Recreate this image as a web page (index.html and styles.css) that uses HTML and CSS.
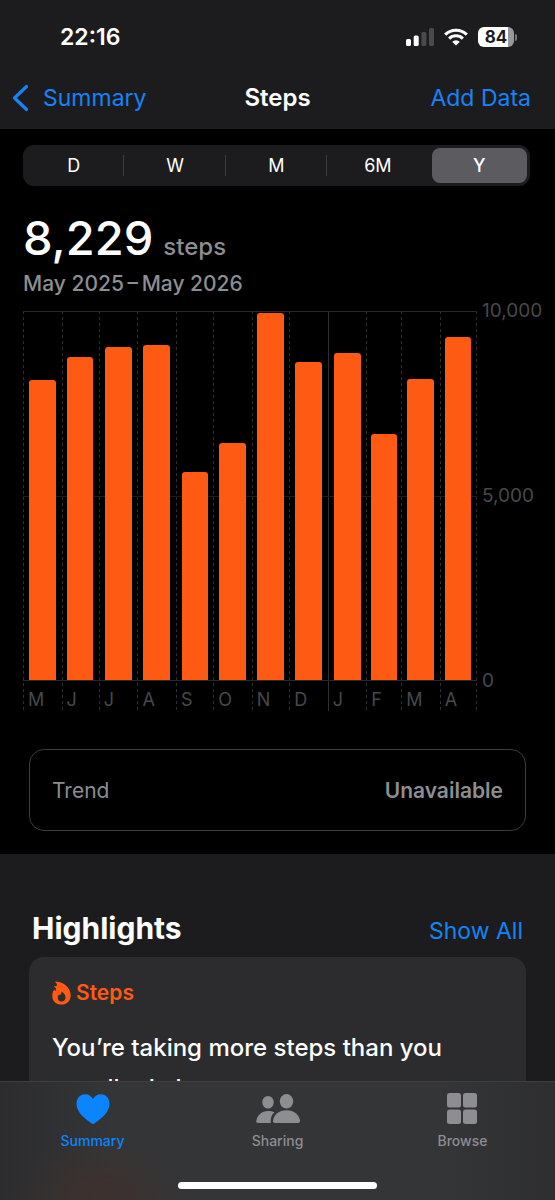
FILE: index.html
```html
<!DOCTYPE html>
<html lang="en">
<head>
<meta charset="utf-8">
<meta name="viewport" content="width=device-width, initial-scale=1">
<title>Steps</title>
<link rel="stylesheet" href="styles.css">
</head>
<body>
<div class="app">
  <header class="header">
    <div class="status">
      <time class="clock">22:16</time>
      <div class="indicators">
        <svg width="28" height="18" viewBox="0 0 28 18" role="img" aria-label="Signal">
          <g fill="#fff"><rect y="11" width="5" height="7" rx="1.5"/><rect x="7.7" y="7.5" width="5" height="10.500" rx="1.500"/></g>
          <g fill="#4a4a4c"><rect x="15.400" y="4" width="5" height="14" rx="1.500"/><rect x="23" width="5" height="18" rx="1.500"/></g>
        </svg>
        <svg width="24" height="18" viewBox="0 0 24 18" role="img" aria-label="Wi-Fi">
          <g fill="none" stroke="#fff" stroke-width="3"><path d="M1.200 6.600a15.300 15.300 0 0 1 21.600 0"/><path d="M5.100 10.600a9.800 9.800 0 0 1 13.800 0"/></g>
          <path fill="#fff" d="M8.200 13.700a5.500 5.500 0 0 1 7.600 0L12 17.600z"/>
        </svg>
        <div class="battery"><span class="charge">84</span><i class="nub"></i></div>
      </div>
    </div>
    <nav class="navbar">
      <a class="back" href="#summary">
        <svg width="17" height="28" viewBox="0 0 17 28" aria-hidden="true"><path d="M14.500 2.500 2.500 14l12 11.500" fill="none" stroke="#1683f7" stroke-width="3.200" stroke-linecap="round" stroke-linejoin="round"/></svg>
        Summary
      </a>
      <h1 class="title">Steps</h1>
      <a class="add" href="#add">Add Data</a>
    </nav>
  </header>

  <main class="content">
    <section class="overview">
      <div class="segments" role="radiogroup" aria-label="Time range">
        <label class="segment"><input type="radio" name="range">D</label>
        <label class="segment"><input type="radio" name="range">W</label>
        <label class="segment"><input type="radio" name="range">M</label>
        <label class="segment"><input type="radio" name="range">6M</label>
        <label class="segment"><input type="radio" name="range" checked>Y</label>
      </div>
      <p class="average"><span class="number">8,229</span><span class="unit">steps</span></p>
      <p class="period">May 2025&thinsp;–&thinsp;May 2026</p>

      <div class="chart">
        <ol class="months">
          <li class="month"><div class="track"><div class="bar" style="height:81.600%"></div></div><span class="name">M</span></li>
          <li class="month"><div class="track"><div class="bar" style="height:87.800%"></div></div><span class="name">J</span></li>
          <li class="month"><div class="track"><div class="bar" style="height:90.500%"></div></div><span class="name">J</span></li>
          <li class="month"><div class="track"><div class="bar" style="height:91.100%"></div></div><span class="name">A</span></li>
          <li class="month"><div class="track"><div class="bar" style="height:56.400%"></div></div><span class="name">S</span></li>
          <li class="month"><div class="track"><div class="bar" style="height:64.500%"></div></div><span class="name">O</span></li>
          <li class="month"><div class="track"><div class="bar" style="height:99.700%"></div></div><span class="name">N</span></li>
          <li class="month"><div class="track"><div class="bar" style="height:86.400%"></div></div><span class="name">D</span></li>
          <li class="month new-year"><div class="track"><div class="bar" style="height:88.900%"></div></div><span class="name">J</span></li>
          <li class="month"><div class="track"><div class="bar" style="height:66.900%"></div></div><span class="name">F</span></li>
          <li class="month"><div class="track"><div class="bar" style="height:81.800%"></div></div><span class="name">M</span></li>
          <li class="month"><div class="track"><div class="bar" style="height:93.200%"></div></div><span class="name">A</span></li>
        </ol>
        <div class="scale"><span>10,000</span><span>5,000</span><span>0</span></div>
      </div>

      <div class="trend"><span>Trend</span><strong class="trend-value">Unavailable</strong></div>
    </section>

    <section class="highlights">
      <div class="heading">
        <h2 class="heading-title">Highlights</h2>
        <a class="show-all" href="#all">Show All</a>
      </div>
      <article class="card">
        <h3 class="card-title">
          <svg width="19" height="24" viewBox="0 0 19 24" aria-hidden="true"><path fill="#ff5a14" fill-rule="evenodd" d="M2.800.400C11.500.400 18.700 6.200 18.700 14.300c0 5.700-3.700 9.300-9.200 9.300C4 23.600.300 20 .300 14.700c0-2.600.700-4.700 1.900-6 .500.700 1 1.100 1.700 1.300C3.700 9 3.800 8 4.200 7.200 3.200 7 2.500 6.300 2 5.200c1.500.200 2.500-.100 3.100-.700C4.900 2.900 4.100 1.500 2.800.400zM9.300 10.500c.300 1.800-.300 2.900-1.200 3.800-.500-.200-.800-.600-.900-1.100-1 1-1.500 2.100-1.500 3.400 0 2.500 1.600 4 3.900 4s3.900-1.500 3.900-4c0-2.900-1.800-4.900-4.200-6.100z"/></svg>
          Steps
        </h3>
        <p class="card-text">You’re taking more steps than you usually do by now.</p>
      </article>
    </section>
  </main>

  <footer class="footer">
    <nav class="tabs">
      <a class="tab active" href="#summary">
        <svg width="34" height="32" viewBox="0 0 34 32" aria-hidden="true"><path fill="currentColor" d="M17 31c-.700 0-1.300-.400-2-.900C6.500 24.300.500 18 .500 10.800.500 5.300 4.200 1.300 9 1.300c3.500 0 6.300 1.700 8 4.700 1.700-3 4.500-4.700 8-4.700 4.800 0 8.500 4 8.500 9.500 0 7.200-6 13.500-14.500 19.300-.700.500-1.300.900-2 .900z"/></svg>
        Summary
      </a>
      <a class="tab" href="#sharing">
        <svg width="46" height="32" viewBox="0 0 46 32" aria-hidden="true"><g fill="currentColor"><ellipse cx="13" cy="9.300" rx="5.700" ry="6.300"/><path d="M19.500 19.300C16.500 22 15.300 25 15.800 30H3c-1.200 0-2-.700-1.700-2.200C2.300 22 7 18 13 18c2.500 0 4.700.400 6.500 1.300z"/><ellipse cx="31.500" cy="8.300" rx="6.700" ry="7.300"/><path d="M31.500 17.300c7.500 0 12.700 4.500 13.500 10.200.200 1.600-.500 2.500-2 2.500H20c-1.500 0-2.200-.900-2-2.500.800-5.700 6-10.200 13.500-10.200z"/></g></svg>
        Sharing
      </a>
      <a class="tab" href="#browse">
        <svg width="32" height="32" viewBox="0 0 32 32" aria-hidden="true"><g fill="currentColor"><rect x="0" y="0" width="14" height="14.500" rx="2.500"/><rect x="16" y="0" width="14" height="14.500" rx="2.500"/><rect x="0" y="16.500" width="14" height="14.500" rx="2.500"/><rect x="16" y="16.500" width="14" height="14.500" rx="2.500"/></g></svg>
        Browse
      </a>
    </nav>
    <div class="home"></div>
  </footer>
</div>
</body>
</html>
```
FILE: styles.css
```css
* { box-sizing: border-box; margin: 0; }
body { background: #000; color: #fff; font-family: Inter, "Liberation Sans", sans-serif; }
a { color: #1683f7; text-decoration: none; }
.app { display: flex; flex-direction: column; height: 100vh; overflow: hidden; }

.header { background: #1c1c1e; border-bottom: 1px solid #202022; }
.status { display: flex; justify-content: space-between; align-items: center; height: 68px; padding: 6px 38px 0 60px; }
.clock { font-size: 23px; font-weight: 600; line-height: 28px; }
.indicators { display: flex; align-items: center; gap: 10px; }
.battery { display: flex; align-items: center; gap: 1px; }
.charge { width: 36px; border-radius: 6px; background: linear-gradient(90deg, #fff 84%, #98989a 84%); color: #1c1c1e; font-size: 17px; font-weight: 700; line-height: 20px; text-align: center; }
.nub { width: 2px; height: 7px; border-radius: 0 2px 2px 0; background: #78787a; }
.navbar { display: grid; grid-template-columns: 1fr auto 1fr; align-items: center; height: 60px; padding: 0 24px; font-size: 23px; line-height: 28px; }
.back { display: flex; align-items: center; gap: 14px; margin-left: -12px; }
.title { font-size: 24px; font-weight: 600; line-height: 28px; }
.add { justify-self: end; }

.content { flex: 1; min-height: 0; overflow: hidden; }
.overview { padding: 16px 0 23px; }
.segments { display: grid; grid-template-columns: repeat(5, 1fr); margin: 0 25px 0 23px; border-radius: 11px; background: #1c1c1f; }
.segment { position: relative; display: flex; align-items: center; justify-content: center; height: 41px; border: 3px solid transparent; border-radius: 11px; background-clip: padding-box; font-size: 18px; }
.segment input { position: absolute; inset: 0; width: 100%; height: 100%; margin: 0; opacity: 0; }
.segment + .segment::before { content: ""; position: absolute; left: -4px; top: 7px; bottom: 7px; width: 1px; background: #3c3c40; }
.segment:has(input:checked) { background-color: #5b5b60; font-weight: 500; }
.segment:has(input:checked)::before { display: none; }
.average { display: flex; align-items: baseline; gap: 10px; padding: 25px 23px 0; line-height: 54px; }
.number { font-size: 47px; font-weight: 500; }
.unit { color: #8d8d92; font-size: 24px; font-weight: 500; }
.period { padding: 0 23px; color: #8d8d92; font-size: 21px; font-weight: 500; line-height: 20px; }

.chart { display: grid; grid-template-columns: 1fr 78px; margin: 17px 0 0 23px; color: #48484b; }
.months { display: grid; grid-template-columns: 31fr 30fr 31fr 31fr 30fr 31fr 30fr 31fr 31fr 28fr 31fr 30fr; padding: 0; list-style: none; background: repeating-linear-gradient(#303032 0 3px, transparent 3px 6px) right / 1px 100% no-repeat; }
.month { background: repeating-linear-gradient(#303032 0 3px, transparent 3px 6px) left / 1px 100% no-repeat; }
.new-year { background: linear-gradient(#303032, #303032) left / 1px 100% no-repeat; }
.track { display: flex; align-items: flex-end; justify-content: center; height: 370px; border-top: 1px solid #28282a; border-bottom: 1px solid #28282a; background: linear-gradient(#1c1c1e, #1c1c1e) center / 100% 1px no-repeat; }
.bar { width: 70%; max-width: 27px; min-width: 26px; border-radius: 3px 3px 0 0; background: #ff5a14; }
.name { display: block; height: 30px; padding: 4px 0 0 5px; font-size: 18px; line-height: 30px; }
.scale { display: flex; flex-direction: column; justify-content: space-between; height: 394px; margin-top: -12px; padding-left: 5px; font-size: 19px; line-height: 24px; }

.trend { display: flex; align-items: center; justify-content: space-between; height: 82px; margin: 38px 29px 0; padding: 0 22px; border: 1px solid #3c3c3e; border-radius: 15px; color: #8d8d92; font-size: 21px; }
.trend-value { font-weight: 600; }

.highlights { min-height: 100%; padding: 50px 29px 0; background: #1c1c1e; }
.heading { display: flex; align-items: baseline; justify-content: space-between; padding: 0 3px 2px; }
.heading-title { font-size: 30px; font-weight: 700; line-height: 48px; }
.show-all { font-size: 23px; line-height: 48px; }
.card { padding: 22px 23px; border-radius: 15px; background: #2c2c2e; }
.card-title { display: flex; align-items: center; gap: 5px; color: #ff5a14; font-size: 21px; font-weight: 600; line-height: 28px; }
.card-text { padding-top: 20px; font-size: 24px; font-weight: 500; line-height: 41px; }

.footer { flex: none; border-top: 1px solid #3e3e40; background: radial-gradient(ellipse 90px 60px at 18% 100%, #3e302d, transparent), linear-gradient(90deg, #2c2c2e, #343537 20%, #343537 80%, #2e2e30); }
.tabs { display: grid; grid-template-columns: repeat(3, 1fr); height: 100px; padding-top: 11px; }
.tab { display: flex; flex-direction: column; align-items: center; gap: 6px; color: #8d8d92; font-size: 14px; font-weight: 500; line-height: 20px; }
.active { color: #0a84ff; }
.home { width: 36%; height: 7px; margin: 0 auto 11px; border-radius: 4px; background: #fff; }
```
